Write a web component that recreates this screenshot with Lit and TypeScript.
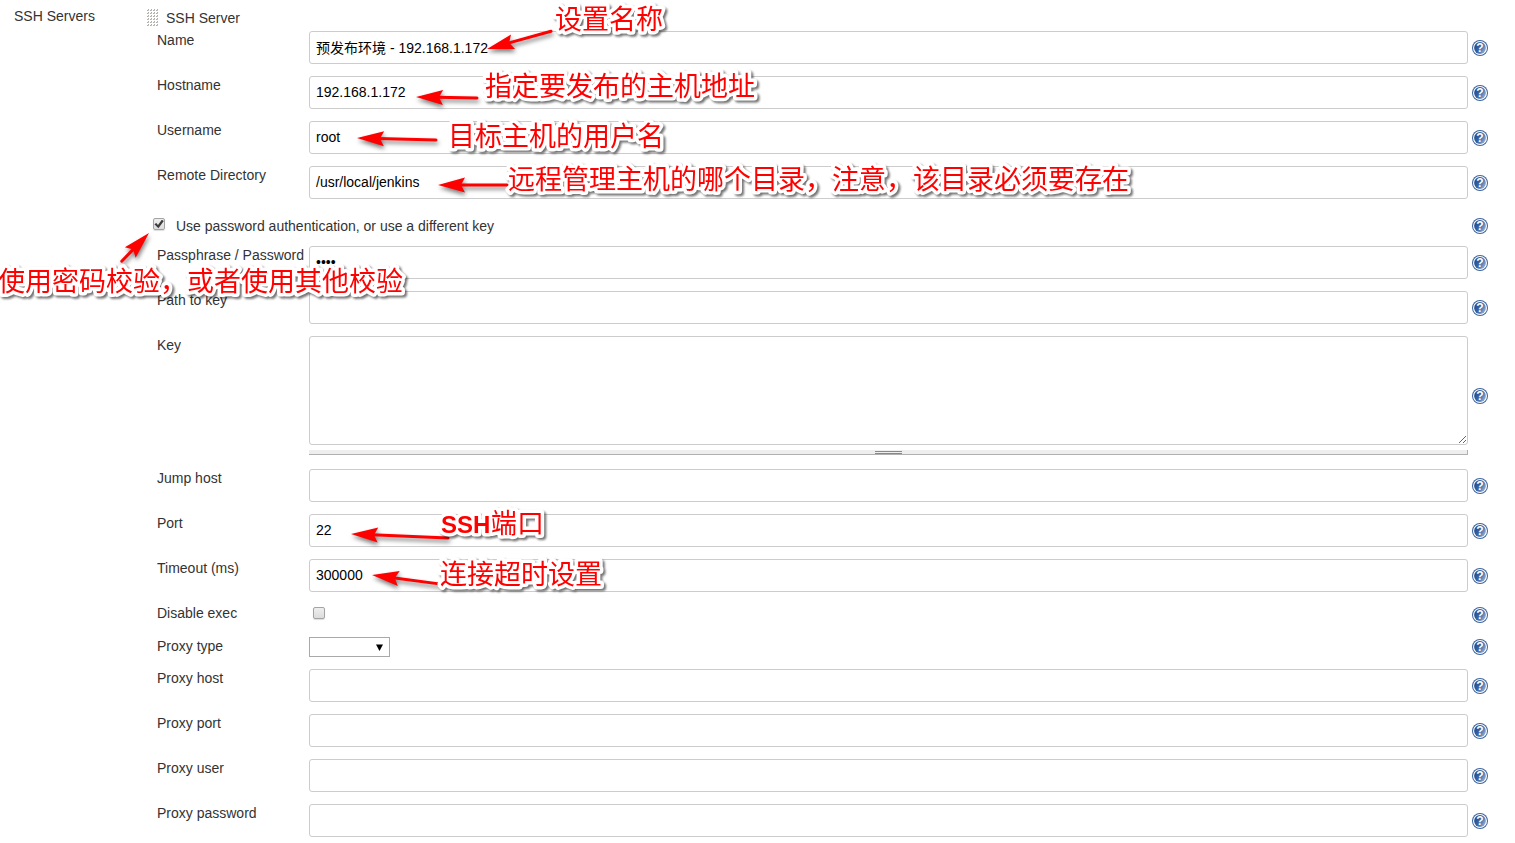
import { LitElement, html, svg, css, nothing } from "lit";
import { customElement, property } from "lit/decorators.js";

interface Note {
  text: string;
  latin?: string;
  x: number;
  y: number;
  tip: [number, number];
  tail: [number, number];
}

/* x and y give the start of each note's baseline */
const NOTES: Note[] = [
  { text: "设置名称", x: 555, y: 29, tip: [487, 49], tail: [552, 31] },
  { text: "指定要发布的主机地址", x: 485, y: 96, tip: [416, 97], tail: [478, 98] },
  { text: "目标主机的用户名", x: 448, y: 146, tip: [357, 138], tail: [437, 140] },
  {
    text: "远程管理主机的哪个目录，注意，该目录必须要存在",
    x: 508, y: 189, tip: [438, 185], tail: [508, 185],
  },
  { text: "使用密码校验，或者使用其他校验", x: -2, y: 291, tip: [149, 233], tail: [121, 262] },
  { latin: "SSH", text: "端口", x: 441, y: 533, tip: [351, 534], tail: [449, 538] },
  { text: "连接超时设置", x: 440, y: 584, tip: [372, 575], tail: [440, 584] },
];

const LATIN_WIDTH = 49;

@customElement("help-link")
export class HelpLink extends LitElement {
  @property() topic = "";

  static styles = css`
    :host { display: block; width: 16px; height: 16px; }
    .link { display: block; text-decoration: none; }
    .icon { display: block; }
    .mark { font: bold 12px "Liberation Sans", Arial, sans-serif; fill: #fff; }
  `;

  render() {
    return html`<a class="link" href="#" aria-label="Help for feature: ${this.topic}">
      <svg class="icon" width="16" height="16" viewBox="0 0 16 16" aria-hidden="true">
        <defs>
          <linearGradient id="g" x1="0" y1="0.2" x2="1" y2="0.8">
            <stop offset="0" stop-color="#1f4a8c" />
            <stop offset="0.5" stop-color="#3c66a4" />
            <stop offset="1" stop-color="#9db6da" />
          </linearGradient>
        </defs>
        <circle cx="8" cy="8" r="8" fill="#3b639e" />
        <circle cx="8" cy="8" r="7" fill="#fff" />
        <circle cx="8" cy="8" r="5.9" fill="url(#g)" />
        <text class="mark" x="8" y="12" text-anchor="middle">?</text>
      </svg>
    </a>`;
  }
}

@customElement("app-root")
export class AppRoot extends LitElement {
  static styles = css`
    :host {
      display: block;
      position: relative;
      overflow: hidden;
      min-height: 100vh;
      box-sizing: border-box;
      background: #fff;
      color: #333;
      font: 14px/18px "Liberation Sans", Arial, "Noto Sans CJK SC", sans-serif;
    }
    * { box-sizing: border-box; }
    .page { display: grid; grid-template-columns: 133px minmax(0, 1fr); padding: 7px 27px 0 14px; }
    .title { margin: 0; font: inherit; }
    .head { display: flex; align-items: center; gap: 7px; height: 24px; padding-bottom: 2px; }
    .grip { display: block; cursor: move; }
    .form { margin: 0; padding-left: 10px; }
    .row {
      display: grid;
      grid-template-columns: 152px minmax(0, 1fr) 16px;
      align-items: start;
      margin-bottom: 12px;
    }
    .row.tall { margin-bottom: 14px; }
    .row.short { min-height: 22px; margin-bottom: 11px; }
    .label { white-space: nowrap; }
    .field { margin-right: 4px; min-width: 0; }
    .help { align-self: center; }
    .input, .area {
      display: block;
      width: 100%;
      margin: 0;
      padding: 5px 6px 7px;
      border: 1px solid #ccc;
      border-radius: 3px;
      background: #fff;
      color: #000;
      font: inherit;
      outline: none;
    }
    .input { height: 33px; }
    .area { height: 109px; resize: vertical; }
    .resizer {
      display: flex;
      justify-content: center;
      height: 5px;
      margin-top: 5px;
      background: #eee;
      border-bottom: 1px solid #b0b0b0;
      border-right: 1px solid #b0b0b0;
    }
    .bars {
      width: 27px;
      height: 3px;
      margin-top: 1px;
      border-top: 1px solid #888;
      border-bottom: 1px solid #888;
    }
    .check {
      appearance: none;
      display: grid;
      place-items: center;
      width: 12px;
      height: 12px;
      margin: 0;
      border: 1px solid #a3a3a3;
      border-radius: 2px;
      background: linear-gradient(#eee, #dcdcdc);
      box-shadow: 0 1px 1px #ddd;
    }
    .check:checked::before {
      content: "";
      width: 10px;
      height: 9px;
      background: #3c3c3c;
      clip-path: polygon(4% 52%, 22% 38%, 40% 60%, 78% 4%, 98% 16%, 44% 98%);
    }
    .optional { display: flex; align-items: center; height: 30px; margin-bottom: 5px; }
    .optional .check { margin: 0 11px 4px -4px; }
    .optional .label { flex: 1; }
    .short .check { margin: 3px 0 0 4px; }
    .select {
      appearance: none;
      display: block;
      width: 81px;
      height: 20px;
      margin: 0;
      border: 1px solid #a9a9a9;
      border-radius: 0;
      background: #fff
        url("data:image/svg+xml,%3Csvg xmlns='http://www.w3.org/2000/svg' width='7' height='7'%3E%3Cpath d='M0 0.5h7L3.5 7z'/%3E%3C/svg%3E")
        no-repeat right 6px center;
      font: inherit;
    }
    .notes {
      position: absolute;
      left: 0;
      top: 0;
      width: 100%;
      height: 100%;
      pointer-events: none;
    }
    .arrow { filter: drop-shadow(1px 3px 2px rgba(0, 0, 0, 0.5)); }
    .caption { filter: drop-shadow(2px 2px 1px rgba(0, 0, 0, 0.55)); }
    .note {
      font: 400 27px "Noto Sans CJK SC", sans-serif;
      fill: #f00;
      stroke: #fff;
      stroke-width: 7px;
      stroke-linejoin: round;
      paint-order: stroke;
    }
    .latin { font: 700 24px "Liberation Sans", Arial, sans-serif; }
  `;

  private textRow(id: string, label: string, value = "", type = "text") {
    return html`<div class="row">
      <label class="label" for=${id}>${label}</label>
      <div class="field"><input class="input" id=${id} type=${type} .value=${value} autocomplete="off" /></div>
      <help-link class="help" topic=${label}></help-link>
    </div>`;
  }

  private arrow(n: Note) {
    const [x, y] = n.tip;
    const dx = n.tail[0] - x;
    const dy = n.tail[1] - y;
    const angle = (Math.atan2(dy, dx) * 180) / Math.PI;
    const length = Math.hypot(dx, dy);
    return svg`<g class="arrow"><g transform="translate(${x} ${y}) rotate(${angle})">
      <path d="M0 0L27 -7.5L23 0L27 7.5Z" fill="#f00" />
      <path d="M21 0H${length - 1}" stroke="#f00" stroke-width="3" stroke-linecap="round" />
    </g></g>`;
  }

  private caption(n: Note) {
    const x = n.latin ? n.x + LATIN_WIDTH : n.x;
    return svg`<g class="caption">
      <text class="note" x=${x} y=${n.y}>${n.text}</text>
      ${n.latin ? svg`<text class="note latin" x=${n.x} y=${n.y}>${n.latin}</text>` : nothing}
    </g>`;
  }

  private grip() {
    const dots = [];
    for (let r = 0; r < 6; r++) {
      for (let c = 0; c < 4; c++) {
        dots.push(svg`<path d="M${c * 3} ${r * 3 + 1.5}h1.5v-1.5" fill="none" stroke="#b0aeaa" />`);
      }
    }
    return html`<svg class="grip" width="12" height="18" viewBox="0 0 12 18" aria-hidden="true">${dots}</svg>`;
  }

  render() {
    return html`
      <main class="page">
        <h1 class="title">SSH Servers</h1>
        <section>
          <div class="head">${this.grip()}<h2 class="title">SSH Server</h2></div>
          <form class="form">
            ${this.textRow("name", "Name", "预发布环境 - 192.168.1.172")}
            ${this.textRow("hostname", "Hostname", "192.168.1.172")}
            ${this.textRow("username", "Username", "root")}
            ${this.textRow("remote", "Remote Directory", "/usr/local/jenkins")}
            <div class="optional">
              <input class="check" id="use-password" type="checkbox" checked />
              <label class="label" for="use-password">Use password authentication, or use a different key</label>
              <help-link topic="Use password authentication"></help-link>
            </div>
            ${this.textRow("passphrase", "Passphrase / Password", "root", "password")}
            ${this.textRow("key-path", "Path to key")}
            <div class="row tall">
              <label class="label" for="key">Key</label>
              <div class="field">
                <textarea class="area" id="key"></textarea>
                <div class="resizer"><div class="bars"></div></div>
              </div>
              <help-link class="help" topic="Key"></help-link>
            </div>
            ${this.textRow("jump-host", "Jump host")}
            ${this.textRow("port", "Port", "22")}
            ${this.textRow("timeout", "Timeout (ms)", "300000")}
            <div class="row short">
              <label class="label" for="disable-exec">Disable exec</label>
              <div class="field"><input class="check" id="disable-exec" type="checkbox" /></div>
              <help-link class="help" topic="Disable exec"></help-link>
            </div>
            <div class="row">
              <label class="label" for="proxy-type">Proxy type</label>
              <div class="field">
                <select class="select" id="proxy-type"><option></option></select>
              </div>
              <help-link class="help" topic="Proxy type"></help-link>
            </div>
            ${this.textRow("proxy-host", "Proxy host")}
            ${this.textRow("proxy-port", "Proxy port")}
            ${this.textRow("proxy-user", "Proxy user")}
            ${this.textRow("proxy-password", "Proxy password", "", "password")}
          </form>
        </section>
      </main>
      <svg class="notes">
        ${NOTES.map((n) => this.arrow(n))}
        ${NOTES.map((n) => this.caption(n))}
      </svg>
    `;
  }
}
